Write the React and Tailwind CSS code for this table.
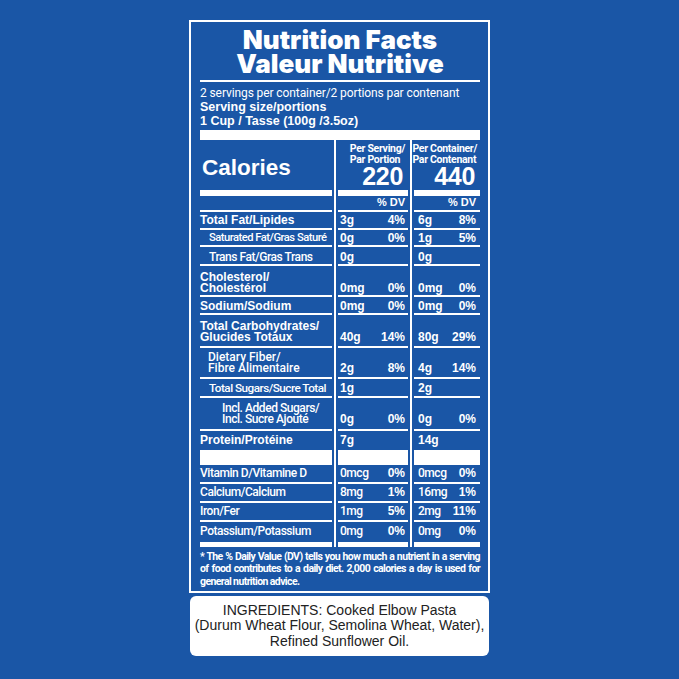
import React from "react";

const HEAVY = "font-['Liberation_Sans',Arial,sans-serif] font-bold text-[12px] whitespace-nowrap";
const MED = "font-['Roboto',sans-serif] font-medium text-[12px] tracking-[-0.45px] whitespace-nowrap";
const MED_TIGHT = "font-['Roboto',sans-serif] font-medium text-[11.2px] tracking-[-0.5px] whitespace-nowrap";
const MED_MID = "font-['Roboto',sans-serif] font-medium text-[11.7px] tracking-[-0.5px] whitespace-nowrap";
const MED_WIDE = "font-['Roboto',sans-serif] font-medium text-[12px] tracking-[0px] whitespace-nowrap";
const SMALL = "font-['Roboto',sans-serif] font-bold text-[10.5px] leading-[10.5px] tracking-[-0.3px] whitespace-nowrap";

const rows = [
  { label: ["Total Fat/Lipides"], h: "h-[18px]", pb: "pb-[1px]", lead: "leading-[14px]", a: "3g", ap: "4%", b: "6g", bp: "8%" },
  { label: ["Saturated Fat/Gras Saturé"], font: MED_TIGHT, indent: "pl-[9px]", h: "h-[17px]", pb: "pb-0", lead: "leading-[14px]", a: "0g", ap: "0%", b: "1g", bp: "5%" },
  { label: ["Trans Fat/Gras Trans"], font: MED, indent: "pl-[9px]", h: "h-[19px]", pb: "pb-0", lead: "leading-[14px]", a: "0g", b: "0g" },
  { label: ["Cholesterol/", "Cholestérol"], h: "h-[31px]", pb: "pb-[1px]", lead: "leading-[11px]", a: "0mg", ap: "0%", b: "0mg", bp: "0%" },
  { label: ["Sodium/Sodium"], h: "h-[18px]", pb: "pb-0", lead: "leading-[14px]", a: "0mg", ap: "0%", b: "0mg", bp: "0%" },
  { label: ["Total Carbohydrates/", "Glucides Totaux"], h: "h-[33px]", pb: "pb-[3px]", lead: "leading-[11px]", a: "40g", ap: "14%", b: "80g", bp: "29%" },
  { label: ["Dietary Fiber/", "Fibre Alimentaire"], font: MED_WIDE, indent: "pl-[8px]", h: "h-[31px]", pb: "pb-[3px]", lead: "leading-[11px]", a: "2g", ap: "8%", b: "4g", bp: "14%" },
  { label: ["Total Sugars/Sucre Total"], font: MED_MID, indent: "pl-[9px]", h: "h-[19px]", pb: "pb-[1px]", lead: "leading-[14px]", a: "1g", b: "2g" },
  { label: ["Incl. Added Sugars/", "Incl. Sucre Ajouté"], font: MED, indent: "pl-[22px]", h: "h-[33px]", pb: "pb-[4px]", lead: "leading-[11px]", a: "0g", ap: "0%", b: "0g", bp: "0%" },
  { label: ["Protein/Protéine"], h: "h-[34px]", border: "border-b-[15px]", pb: "pb-[3px]", lead: "leading-[14px]", a: "7g", b: "14g" },
  { label: ["Vitamin D/Vitamine D"], font: MED, low: true, h: "h-[19px]", pb: "pb-[2px]", lead: "leading-[14px]", a: "0mcg", ap: "0%", b: "0mcg", bp: "0%" },
  { label: ["Calcium/Calcium"], font: MED, low: true, h: "h-[19px]", pb: "pb-[2px]", lead: "leading-[14px]", a: "8mg", ap: "1%", b: "16mg", bp: "1%" },
  { label: ["Iron/Fer"], font: MED, low: true, h: "h-[19px]", pb: "pb-[2px]", lead: "leading-[14px]", a: "1mg", ap: "5%", b: "2mg", bp: "11%" },
  { label: ["Potassium/Potassium"], font: MED, low: true, h: "h-[25px]", border: "border-b-[5px]", pb: "pb-[4px]", lead: "leading-[14px]", a: "0mg", ap: "0%", b: "0mg", bp: "0%" },
];

function VLine() {
  return (
    <div className="w-[6px] shrink-0 flex justify-center">
      <div className="w-[2px] bg-white" />
    </div>
  );
}

function Row({ r }) {
  const border = r.border || "border-b-2";
  const labelFont = r.font || HEAVY;
  const valFont = r.low ? MED : HEAVY;
  return (
    <div className={`flex ${r.h}`}>
      <div className={`w-[132px] shrink-0 flex items-end border-white ${border} ${r.pb} ${r.indent || ""}`}>
        <div className={`${labelFont} ${r.lead}`}>
          {r.label.map((line) => (
            <div key={line}>{line}</div>
          ))}
        </div>
      </div>
      <VLine />
      <div className={`w-[70px] shrink-0 flex items-end justify-between pl-[2px] pr-[3px] border-white ${border} ${r.pb}`}>
        <span className={`${valFont} ${r.lead}`}>{r.a}</span>
        <span className={`${HEAVY} ${r.lead}`}>{r.ap}</span>
      </div>
      <VLine />
      <div className={`w-[66px] shrink-0 flex items-end justify-between pl-[4px] pr-[4px] border-white ${border} ${r.pb}`}>
        <span className={`${valFont} ${r.lead}`}>{r.b}</span>
        <span className={`${HEAVY} ${r.lead}`}>{r.bp}</span>
      </div>
    </div>
  );
}

function CalorieCell({ top, bottom, value }) {
  return (
    <div className="h-full flex flex-col items-end border-b-[6px] border-white pt-[4px] pr-[3px]">
      <div className="text-left">
        <div className={SMALL}>{top}</div>
        <div className={SMALL}>{bottom}</div>
      </div>
      <div className="font-['Liberation_Sans',Arial,sans-serif] font-bold text-[25px] leading-[22px] tracking-[-0.3px] pr-[2px]">
        {value}
      </div>
    </div>
  );
}

export default function App() {
  return (
    <div className="w-[679px] h-[679px] bg-[#1a56a6] flex flex-col items-center pt-[20px] text-white">
      <div className="w-[301px] border-2 border-white pl-[9px] pr-[8px] pt-[6px] pb-[3px]">
        <div className="text-center font-['Inter',sans-serif] font-black text-[26px] leading-[24px] whitespace-nowrap">
          <div>Nutrition Facts</div>
          <div>Valeur Nutritive</div>
        </div>
        <div className="mt-[4px] h-[2px] bg-white" />
        <div className="mt-[4px] text-[12px] leading-[14px] whitespace-nowrap">
          <div className="font-['Roboto',sans-serif] tracking-[-0.1px]">
            2 servings per container/2 portions par contenant
          </div>
          <div className="font-['Liberation_Sans',Arial,sans-serif] font-bold text-[12.5px]">Serving size/portions</div>
          <div className="font-['Liberation_Sans',Arial,sans-serif] font-bold text-[12.5px]">1 Cup / Tasse (100g /3.5oz)</div>
        </div>
        <div className="mt-[2px] h-[10px] bg-white" />

        <div className="flex h-[56px]">
          <div className="w-[132px] shrink-0 border-b-[6px] border-white flex items-end pb-[9px] pl-[2px]">
            <span className="font-['Liberation_Sans',Arial,sans-serif] font-bold text-[22.5px] leading-[26px]">
              Calories
            </span>
          </div>
          <VLine />
          <div className="w-[70px] shrink-0">
            <CalorieCell top="Per Serving/" bottom="Par Portion" value="220" />
          </div>
          <VLine />
          <div className="w-[66px] shrink-0">
            <CalorieCell top="Per Container/" bottom="Par Contenant" value="440" />
          </div>
        </div>

        <div className="flex h-[16px]">
          <div className="w-[132px] shrink-0 border-b-2 border-white" />
          <VLine />
          <div className="w-[70px] shrink-0 border-b-2 border-white flex items-end justify-end pr-[3px] pb-[1px]">
            <span className="font-['Liberation_Sans',Arial,sans-serif] font-bold text-[11px] leading-[13px]">% DV</span>
          </div>
          <VLine />
          <div className="w-[66px] shrink-0 border-b-2 border-white flex items-end justify-end pr-[4px] pb-[1px]">
            <span className="font-['Liberation_Sans',Arial,sans-serif] font-bold text-[11px] leading-[13px]">% DV</span>
          </div>
        </div>

        {rows.map((r) => (
          <Row key={r.label[0]} r={r} />
        ))}

        <div className="mt-[4px] font-['Roboto',sans-serif] font-bold text-[10.5px] leading-[12.3px] tracking-[-0.6px]">
          <div className="whitespace-nowrap text-justify [text-align-last:justify]">
            * The % Daily Value (DV) tells you how much a nutrient in a serving
          </div>
          <div className="whitespace-nowrap text-justify [text-align-last:justify]">
            of food contributes to a daily diet. 2,000 calories a day is used for
          </div>
          <div>general nutrition advice.</div>
        </div>
      </div>

      <div className="mt-[3px] w-[299px] h-[60px] bg-white rounded-[6px] pt-[7px] text-center text-[#222222] font-['Liberation_Sans',Arial,sans-serif] text-[14px] leading-[15.5px] whitespace-nowrap">
        <div>INGREDIENTS: Cooked Elbow Pasta</div>
        <div>(Durum Wheat Flour, Semolina Wheat, Water),</div>
        <div>Refined Sunflower Oil.</div>
      </div>
    </div>
  );
}
